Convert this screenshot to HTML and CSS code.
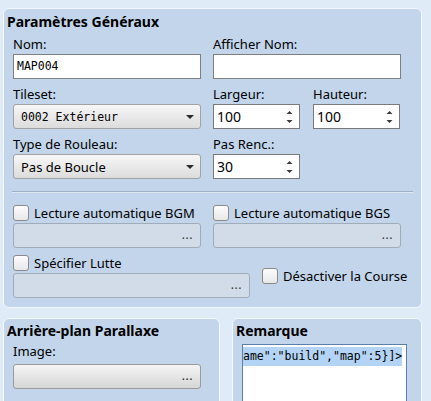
FILE: index.html
```html
<!DOCTYPE html>
<html lang="fr">
<head>
<meta charset="utf-8">
<title>Propriétés de la carte</title>
<link rel="stylesheet" href="styles.css">
</head>
<body>

<div id="page">

  <div class="panel" id="general">
    <div class="title">Paramètres Généraux</div>

    <div class="grid">
      <div class="field">
        <label>Nom:</label>
        <div class="edit mono">MAP004</div>
      </div>
      <div class="field">
        <label>Afficher Nom:</label>
        <div class="edit"></div>
      </div>

      <div class="field">
        <label>Tileset:</label>
        <div class="combo mono">
          <span>0002 Extérieur</span>
          <svg class="arrow" width="8" height="4" viewBox="0 0 8 4"><path d="M0 0H8L4 4Z"/></svg>
        </div>
      </div>
      <div class="pair">
        <div class="field">
          <label>Largeur:</label>
          <div class="spin">
            <span>100</span>
            <svg class="updown" width="7" height="14" viewBox="0 0 7 14"><path d="M3.5 1L6.5 4H0.5Z M0.5 10H6.5L3.5 13Z"/></svg>
          </div>
        </div>
        <div class="field">
          <label>Hauteur:</label>
          <div class="spin">
            <span>100</span>
            <svg class="updown" width="7" height="14" viewBox="0 0 7 14"><path d="M3.5 1L6.5 4H0.5Z M0.5 10H6.5L3.5 13Z"/></svg>
          </div>
        </div>
      </div>

      <div class="field">
        <label>Type de Rouleau:</label>
        <div class="combo">
          <span>Pas de Boucle</span>
          <svg class="arrow" width="8" height="4" viewBox="0 0 8 4"><path d="M0 0H8L4 4Z"/></svg>
        </div>
      </div>
      <div class="pair">
        <div class="field">
          <label>Pas Renc.:</label>
          <div class="spin">
            <span>30</span>
            <svg class="updown" width="7" height="14" viewBox="0 0 7 14"><path d="M3.5 1L6.5 4H0.5Z M0.5 10H6.5L3.5 13Z"/></svg>
          </div>
        </div>
      </div>
    </div>

    <div class="separator"></div>

    <div class="audio">
      <div class="field">
        <div class="checkrow"><span class="check"></span>Lecture automatique BGM</div>
        <div class="button flat">...</div>
      </div>
      <div class="field">
        <div class="checkrow"><span class="check"></span>Lecture automatique BGS</div>
        <div class="button flat">...</div>
      </div>
    </div>

    <div class="battle">
      <div class="field lutte">
        <div class="checkrow"><span class="check"></span>Spécifier Lutte</div>
        <div class="button flat">...</div>
      </div>
      <div class="checkrow"><span class="check"></span>Désactiver la Course</div>
    </div>
  </div>

  <div class="bottom">
    <div class="panel" id="parallax">
      <div class="title">Arrière-plan Parallaxe</div>
      <div class="inner">
        <label class="image-label">Image:</label>
        <div class="button raised">...</div>
      </div>
    </div>
    <div class="panel" id="note">
      <div class="title">Remarque</div>
      <div class="textarea mono"><span class="selected">ame":"build","map":5}]&gt;</span></div>
    </div>
  </div>

</div>

</body>
</html>
```

FILE: styles.css
```css
body {
  margin: 0;
  padding: 0;
  overflow: hidden;
  background-color: #e0ebf8;
  font-family: "Noto Sans", sans-serif;
  font-size: 13px;
  color: #000;
}

.mono {
  font-family: "DejaVu Sans Mono", monospace;
  font-size: 11.5px;
}

#page {
  display: flex;
  flex-direction: column;
  gap: 10px;
  width: 419px;
  padding: 8px 0 0 3px;
}

.panel {
  background-color: #c2d5ea;
  border: 1px solid #f4f8fc;
  border-radius: 6px;
  padding: 4px 3px 9px;
}

.title {
  font-weight: bold;
  font-size: 14px;
  line-height: 18px;
}

label {
  display: block;
  line-height: 18px;
}

.grid {
  display: grid;
  grid-template-columns: 188px 188px;
  column-gap: 12px;
  row-gap: 6px;
  margin: 4px 0 0 6px;
}

.pair {
  display: grid;
  grid-template-columns: 87px 87px;
  column-gap: 13px;
}

.edit,
.combo,
.spin,
.button {
  box-sizing: border-box;
  height: 25px;
  margin-top: 1px;
}

.edit {
  border: 1px solid #7f7f7f;
  background-color: #fff;
  line-height: 23px;
  padding: 0 3px;
}

.combo {
  display: flex;
  align-items: center;
  justify-content: space-between;
  border: 1px solid #a2a2a2;
  border-radius: 3px;
  background: linear-gradient(#f7f7f7, #dcdcdc);
  padding: 0 6px 0 7px;
}

.combo .arrow {
  fill: #2b2b2b;
}

.spin {
  display: flex;
  align-items: center;
  justify-content: space-between;
  border: 1px solid #7a7a7a;
  background-color: #fff;
  font-size: 14px;
  padding: 0 6px 0 3px;
}

.spin .updown {
  fill: #3a3a3a;
}

.separator {
  width: 401px;
  margin: 12px 0 11px 5px;
  border-top: 1px solid #9fafc2;
  border-bottom: 1px solid #dfe9f4;
}

.audio {
  display: grid;
  grid-template-columns: 188px 188px;
  column-gap: 12px;
  margin-left: 6px;
}

.battle {
  display: flex;
  align-items: center;
  gap: 12px;
  margin: 6px 0 0 6px;
}

.lutte {
  width: 237px;
}

.checkrow {
  display: flex;
  align-items: center;
  gap: 5px;
  height: 18px;
  line-height: 18px;
  white-space: nowrap;
}

.check {
  box-sizing: border-box;
  width: 16px;
  height: 16px;
  border: 1px solid #8a8a8a;
  border-radius: 3px;
  background: linear-gradient(#fcfcfc, #e8e8e8);
}

.button {
  text-align: right;
  line-height: 21px;
  padding-right: 7px;
  font-size: 12px;
  letter-spacing: 0.5px;
  border-radius: 3px;
}

.button.flat {
  border: 1px solid #a0acb8;
  background-color: #d1dce8;
  color: #333;
}

.button.raised {
  border: 1px solid #9a9a9a;
  background: linear-gradient(#f5f5f5, #d6d6d6);
  color: #222;
}

.bottom {
  display: flex;
  gap: 12px;
}

.bottom .panel {
  box-sizing: border-box;
  height: 100px;
  padding-top: 3px;
}

#parallax {
  width: 217px;
}

#note {
  width: 190px;
}

.inner {
  margin-left: 6px;
  width: 188px;
}

.image-label {
  margin-top: 2px;
}

.inner .button {
  margin-top: 4px;
}

.textarea {
  box-sizing: border-box;
  width: 165px;
  height: 80px;
  margin: 4px 0 0 6px;
  border: 1px solid #5c7fae;
  background-color: #fff;
  padding-top: 2px;
  line-height: 19px;
  white-space: nowrap;
  overflow: hidden;
}

.selected {
  display: inline-block;
  background-color: #b3d4f4;
}
```
